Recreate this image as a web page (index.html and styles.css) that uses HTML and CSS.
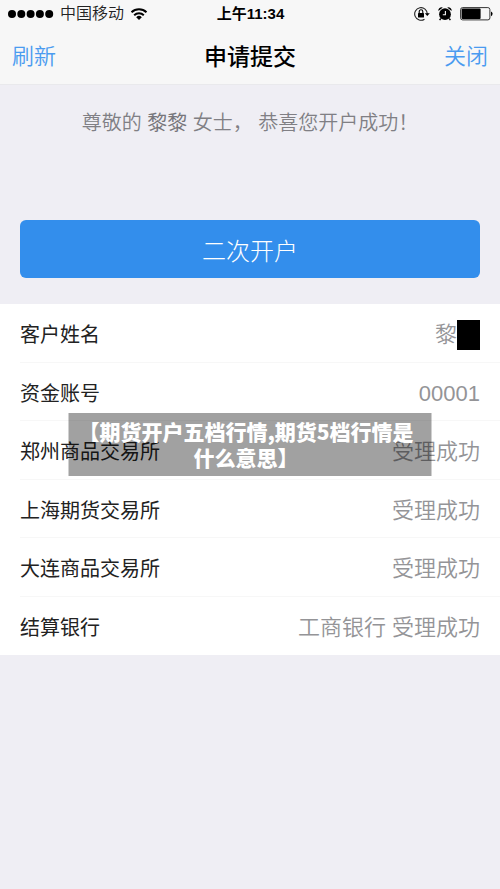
FILE: index.html
```html
<!DOCTYPE html>
<html lang="zh-CN">
<head>
  <meta charset="UTF-8">
  <meta name="viewport" content="width=device-width, initial-scale=1.0">
  <title>申请提交</title>
  <link rel="stylesheet" href="styles.css">
</head>
<body>
  <header>
    <div class="status-bar">
      <div class="carrier">
        <svg width="46" height="10" viewBox="0 0 46 10">
          <circle cx="4" cy="5" r="4"/>
          <circle cx="13.3" cy="5" r="4"/>
          <circle cx="22.6" cy="5" r="4"/>
          <circle cx="31.9" cy="5" r="4"/>
          <circle cx="41.2" cy="5" r="4"/>
        </svg>
        <span>中国移动</span>
        <svg width="18" height="14" viewBox="0 0 18 14">
          <path d="M1.5 5.2a10.8 10.8 0 0 1 15 0M4.2 8.2a7 7 0 0 1 9.6 0" fill="none" stroke="#000" stroke-width="2"/>
          <path d="M9 13L6.2 10.2a4 4 0 0 1 5.6 0z"/>
        </svg>
      </div>
      <div class="time">上午11:34</div>
      <div class="indicators">
        <svg width="16" height="16" viewBox="0 0 16 16">
          <path d="M13.3 8A6.3 6.3 0 1 0 10.5 13.2" fill="none" stroke="#222" stroke-width="1.1"/>
          <path d="M10.8 7.2h5L13.3 10z"/>
          <rect x="4" y="7" width="6" height="4.5" rx="0.5"/>
          <path d="M5.2 7V5.6a1.8 1.8 0 0 1 3.6 0V7" fill="none" stroke="#000" stroke-width="1.1"/>
        </svg>
        <svg width="14" height="16" viewBox="0 0 14 16">
          <circle cx="7" cy="8.2" r="5.9"/>
          <path d="M0.4 5A3.2 3.2 0 0 1 4.8 1.5zM13.6 5A3.2 3.2 0 0 0 9.2 1.5z"/>
          <path d="M2.8 12.5L1.6 14.2M11.2 12.5l1.2 1.7" stroke="#000" stroke-width="1.4"/>
          <path d="M7.4 5v3.7H4.8" fill="none" stroke="#f7f7f7" stroke-width="1.1"/>
        </svg>
        <svg width="33" height="14" viewBox="0 0 33 14">
          <rect x="0.6" y="0.6" width="29.3" height="12.3" rx="2" fill="none" stroke="#333" stroke-width="1"/>
          <rect x="1.6" y="1.6" width="19" height="10.4" rx="1"/>
          <path d="M31 4.4q1.6 0.6 1.6 2.4T31 9.2z"/>
        </svg>
      </div>
    </div>
    <nav>
      <a href="#">刷新</a>
      <h1>申请提交</h1>
      <a href="#">关闭</a>
    </nav>
  </header>

  <main>
    <p class="greeting">尊敬的 <span>黎黎</span> 女士， 恭喜您开户成功！</p>
    <button type="button" class="open-account">二次开户</button>

    <div class="details">
      <table>
        <tr>
          <th scope="row">客户姓名</th>
          <td>黎<span class="mask"></span></td>
        </tr>
        <tr>
          <th scope="row">资金账号</th>
          <td>00001</td>
        </tr>
        <tr>
          <th scope="row">郑州商品交易所</th>
          <td>受理成功</td>
        </tr>
        <tr>
          <th scope="row">上海期货交易所</th>
          <td>受理成功</td>
        </tr>
        <tr>
          <th scope="row">大连商品交易所</th>
          <td>受理成功</td>
        </tr>
        <tr>
          <th scope="row">结算银行</th>
          <td>工商银行 受理成功</td>
        </tr>
      </table>
      <div class="caption">【期货开户五档行情,期货5档行情是<br>什么意思】</div>
    </div>
  </main>
</body>
</html>
```

FILE: styles.css
```css
* {
  box-sizing: border-box;
}
body {
  margin: 0;
  background-color: #efeef4;
  font-family: "Liberation Sans", "Noto Sans CJK SC", sans-serif;
  color: #222;
}
header {
  background-color: #f7f7f7;
  border-bottom: 1px solid #e9e9ec;
}
.status-bar {
  display: grid;
  grid-template-columns: 1fr auto 1fr;
  align-items: center;
  height: 28px;
  padding: 0 7px 0 8px;
  color: #000;
}
.carrier {
  display: flex;
  align-items: center;
  gap: 6px;
  font-size: 16px;
  font-weight: 350;
  line-height: 28px;
  color: #222;
}
.time {
  font-size: 15px;
  font-weight: bold;
  line-height: 28px;
}
.indicators {
  display: flex;
  align-items: center;
  justify-content: flex-end;
  gap: 8px;
}
nav {
  display: flex;
  align-items: center;
  justify-content: space-between;
  height: 56px;
  padding: 2px 12px 0;
}
nav a {
  color: #4a9bf0;
  font-size: 22px;
  font-weight: 350;
  line-height: 54px;
  text-decoration: none;
}
h1 {
  margin: 0;
  color: #000;
  font-size: 23px;
  font-weight: 500;
  line-height: 54px;
}
.greeting {
  margin: 0;
  padding: 23px 0 21px;
  color: #807f84;
  font-size: 20px;
  font-weight: 350;
  line-height: 30px;
  text-align: center;
}
.greeting span {
  color: #77767b;
  font-weight: 400;
}
.open-account {
  display: block;
  width: calc(100% - 40px);
  height: 58px;
  margin: 61px 20px 26px;
  border: 0;
  border-radius: 6px;
  background-color: #338eec;
  color: #fff;
  font-family: inherit;
  font-size: 24px;
  font-weight: 300;
}
.details {
  position: relative;
  background-color: #fff;
}
table {
  width: 100%;
  height: 351px;
  padding-left: 20px;
  border-spacing: 0;
}
tr {
  height: 58px;
}
th,
td {
  padding: 5px 0 0;
  border-bottom: 1px solid #f7f7f7;
  line-height: 30px;
  vertical-align: middle;
}
tr:last-child th,
tr:last-child td {
  border-bottom: 0;
}
th {
  font-size: 20px;
  font-weight: normal;
  text-align: left;
}
td {
  padding-right: 20px;
  color: #949497;
  font-size: 22px;
  font-weight: 350;
  text-align: right;
}
.mask {
  display: inline-block;
  width: 23px;
  height: 30px;
  background-color: #000;
  vertical-align: top;
}
.caption {
  position: absolute;
  top: 109px;
  left: 50%;
  width: 363px;
  padding: 5px 16px 6px 8px;
  background-color: rgba(0, 0, 0, 0.37);
  color: #fff;
  font-family: "Noto Sans CJK SC", sans-serif;
  font-size: 21px;
  font-weight: 900;
  line-height: 26px;
  text-align: center;
  white-space: nowrap;
  transform: translateX(-50%);
}
```
